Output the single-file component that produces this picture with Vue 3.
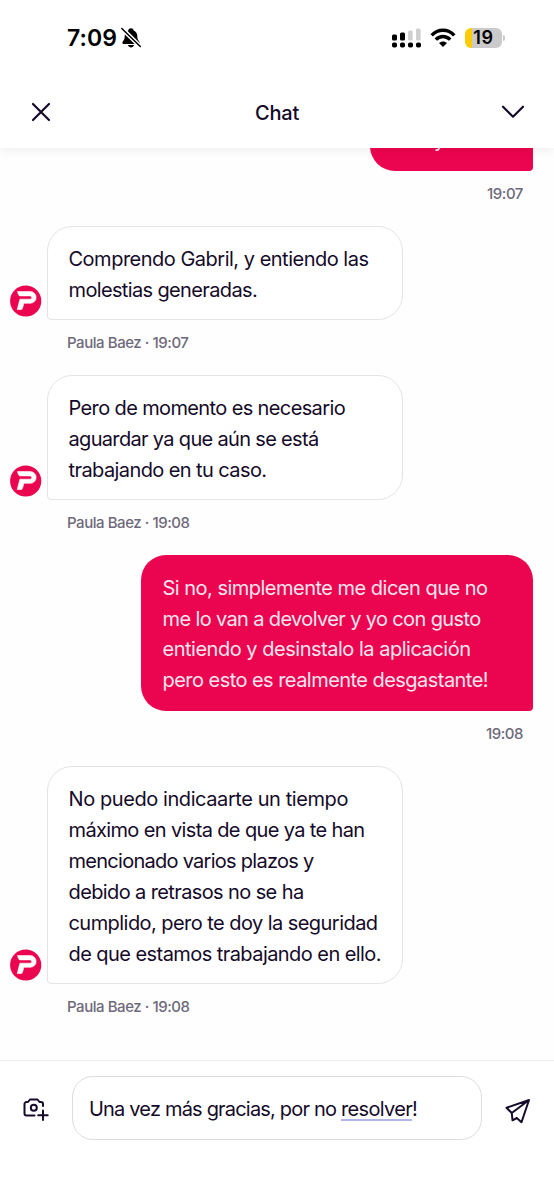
<script setup>
const thread = [
  {
    mine: false,
    lines: [['Comprendo Gabril, y entiendo las', 300], ['molestias generadas.', 188.5]],
    meta: ['Paula Baez · 19:07', 121.5],
  },
  {
    mine: false,
    lines: [['Pero de momento es necesario', 276.5], ['aguardar ya que aún se está', 250], ['trabajando en tu caso.', 198]],
    meta: ['Paula Baez · 19:08', 122.5],
  },
  {
    mine: true,
    lines: [
      ['Si no, simplemente me dicen que no', 325],
      ['me lo van a devolver y yo con gusto', 318],
      ['entiendo y desinstalo la aplicación', 308],
      ['pero esto es realmente desgastante!', 325.5],
    ],
    meta: ['19:08', 37],
  },
  {
    mine: false,
    lines: [
      ['No puedo indicaarte un tiempo', 279.5],
      ['máximo en vista de que ya te han', 296],
      ['mencionado varios plazos y', 245],
      ['debido a retrasos no se ha', 235],
      ['cumplido, pero te doy la seguridad', 309],
      ['de que estamos trabajando en ello.', 312.5],
    ],
    meta: ['Paula Baez · 19:08', 122.5],
  },
]

const vFit = {
  mounted(el, { value }) {
    const natural = el.getBoundingClientRect().width
    el.style.letterSpacing = `${(value - natural) / el.textContent.length}px`
  },
}
</script>

<template>
  <div class="screen">
    <header class="top">
      <div class="status">
        <div class="clock">
          <span v-fit="50">7:09</span>
          <svg class="bell" width="22" height="22" viewBox="0 0 22 22">
            <path d="M11 1.2c1.5 0 2.4.9 2.7 2.2 2.4 1 3.6 3 3.6 5.7 0 3 .8 4.2 2 5.7.8 1 .3 2.2-1 2.2H3.7c-1.3 0-1.8-1.2-1-2.2 1.2-1.5 2-2.7 2-5.7 0-2.700 1.200-4.700 3.600-5.700C8.600 2.100 9.500 1.200 11 1.200zM8 18h6c-.3 1.500-1.500 2.400-3 2.400S8.300 19.500 8 18z" />
            <path d="M1.800 1.500l18.500 18" stroke="#fff" stroke-width="4.500" />
            <path d="M1.800 1.500l18.500 18" stroke="#000" stroke-width="1.500" stroke-linecap="round" />
          </svg>
        </div>
        <div class="indicators">
          <svg width="29" height="20" viewBox="0 0 29 20">
            <rect x="0" y="6.500" width="5" height="6" rx="1.500" />
            <rect x="8" y="4.500" width="5" height="8" rx="1.500" />
            <rect x="16" y="2.500" width="4.600" height="10" rx="1.500" fill="#cfcfcf" />
            <rect x="24" y="0.500" width="4.600" height="12" rx="1.500" fill="#cfcfcf" />
            <rect v-for="x in [0, 8, 16, 24]" :key="x" :x="x" y="14.500" width="5" height="5" rx="1.800" />
          </svg>
          <svg class="wifi" width="26" height="20" viewBox="0 0 26 20">
            <g fill="none" stroke="#000" stroke-width="3.400">
              <path d="M1.700 7.300C8 .6 18 .6 24.300 7.300" />
              <path d="M5.800 11.700c4.100-4.300 10.300-4.300 14.400 0" />
            </g>
            <path d="M13 19l-4-3.900c2.200-2.300 5.800-2.300 8 0z" />
          </svg>
          <div class="battery"><span v-fit="20.5">19</span></div>
        </div>
      </div>
      <div class="bar">
        <svg width="20" height="20" viewBox="0 0 20 20" class="line">
          <path d="M2 2l16 16M18 2L2 18" />
        </svg>
        <h1><span v-fit="44">Chat</span></h1>
        <svg width="24" height="14" viewBox="0 0 24 14" class="line">
          <path d="M2 1.700l10 10 10-10" />
        </svg>
      </div>
    </header>

    <main class="thread">
      <section class="row mine first">
        <div class="bubble cut"><p>y</p></div>
        <div class="meta"><span v-fit="36">19:07</span></div>
      </section>
      <section v-for="(m, i) in thread" :key="i" class="row" :class="{ mine: m.mine }">
        <div class="body">
          <svg v-if="!m.mine" class="avatar" width="32" height="32" viewBox="0 0 32 32">
            <circle cx="15.700" cy="16" r="15.600" fill="#eb044f" />
            <path d="M7.400 6.600H20.300a5.850 5.850 0 0 1 0 11.700H13.900L12.500 23.300Q12.200 24.500 11 24.500H7.200L9.900 14.200H20.100a1.650 1.650 0 0 0 0-3.300H10.300Q9 10.900 8.500 9.700z" fill="#fff" stroke="#fff" stroke-width=".6" stroke-linejoin="round" />
          </svg>
          <div class="bubble">
            <p v-for="line in m.lines" :key="line[0]"><span v-fit="line[1]">{{ line[0] }}</span></p>
          </div>
        </div>
        <div class="meta"><span v-fit="m.meta[1]">{{ m.meta[0] }}</span></div>
      </section>
    </main>

    <footer class="composer">
      <svg class="camera" width="26" height="24" viewBox="0 0 26 24">
        <g fill="none" stroke="#170b2b" stroke-width="2" stroke-linecap="round" stroke-linejoin="round">
          <path d="M11.500 17.500H3.500a2 2 0 0 1-2-2V6a2 2 0 0 1 2-2H5l2-2.500h7.500L16.500 4H18a2 2 0 0 1 2 2v2" />
          <circle cx="10.800" cy="9.800" r="3" />
          <path d="M20 12.500v9.500M15.200 17.300h9.500" />
        </g>
      </svg>
      <div class="field">
        <span v-fit="252">Una vez más gracias, por no&nbsp;</span><span v-fit="71" class="marked">resolver</span><span>!</span>
      </div>
      <svg class="send" width="26" height="26" viewBox="0 0 26 26">
        <path d="M24 2L1.500 9.800l5.300 5.200L24 2l-7.500 22.200-4.700-4.200-4.300 2.300-.7-7.300" fill="none" stroke="#170b2b" stroke-width="2" stroke-linejoin="round" stroke-linecap="round" />
      </svg>
    </footer>
  </div>
</template>

<style>
body {
  background: #fff;
}
</style>

<style scoped>
.screen {
  width: 554px;
  height: 1200px;
  display: flex;
  flex-direction: column;
  overflow: hidden;
  background: #fefefe;
  color: #150a29;
  font-family: Inter, "Liberation Sans", sans-serif;
  font-size: 20px;
}
svg {
  display: block;
  flex: none;
}
span {
  white-space: nowrap;
}
.top {
  flex: none;
  height: 148px;
  background: #fff;
  box-shadow: 0 1px 10px rgba(70, 0, 25, 0.09);
  position: relative;
  z-index: 1;
}
.status {
  height: 76px;
  padding: 0 49px 0 67px;
  display: flex;
  align-items: center;
  justify-content: space-between;
  color: #000;
}
.clock {
  display: flex;
  align-items: center;
  font-size: 23px;
  font-weight: 600;
}
.bell {
  margin-left: 3px;
}
.indicators {
  display: flex;
  align-items: center;
}
.wifi {
  margin: 0 9px 0 9px;
}
.battery {
  width: 37px;
  height: 20px;
  margin-right: 3px;
  border-radius: 6px;
  position: relative;
  background: linear-gradient(90deg, #fccb08 7px, #cacaca 7px);
  text-align: center;
  font-size: 18px;
  line-height: 20px;
  font-weight: 600;
}
.battery::after {
  content: "";
  position: absolute;
  right: -3px;
  top: 7px;
  width: 2px;
  height: 6px;
  border-radius: 0 3px 3px 0;
  background: #cacaca;
}
.bar {
  height: 72px;
  padding: 0 29px 0 31px;
  display: grid;
  grid-template-columns: 20px 1fr 24px;
  align-items: center;
}
.line {
  fill: none;
  stroke: #150a29;
  stroke-width: 2.2;
  stroke-linecap: round;
  stroke-linejoin: round;
}
h1 {
  margin: 2px 0 0 2px;
  text-align: center;
  font-size: 20px;
  line-height: 24px;
  font-weight: 500;
}
.thread {
  flex: 1;
  min-height: 0;
  overflow: hidden;
}
.row {
  display: flex;
  flex-direction: column;
  align-items: flex-start;
  padding: 0 21px 0 10px;
  margin-bottom: 21.7px;
}
.mine {
  align-items: flex-end;
}
.body {
  display: flex;
  align-items: flex-end;
}
.avatar {
  margin: 0 5px 3px 0;
}
.bubble {
  box-sizing: border-box;
  width: 356px;
  padding: 17px 21px 13.600px 20.500px;
  border: 1px solid #e4e3e8;
  border-radius: 25px 25px 25px 4px;
  background: #fff;
}
.mine .bubble {
  width: 392px;
  padding: 18px 21px 15.200px 21.500px;
  border: 0;
  border-radius: 25px 25px 4px 25px;
  background: #eb044f;
  color: #ffe6f0;
}
.mine .cut {
  width: 163px;
  height: 54px;
  margin-top: -31px;
  padding: 8px 0 0 64px;
}
p {
  margin: 0;
  height: 30.900px;
  line-height: 30.900px;
}
.meta {
  height: 20px;
  margin: 13px 10px 0 57px;
  line-height: 20px;
  font-size: 15px;
  font-weight: 500;
  color: #6e697a;
}
.first {
  margin-bottom: 21.700px;
}
.composer {
  flex: none;
  height: 139.500px;
  border-top: 1px solid #ececef;
  display: flex;
  align-items: flex-start;
  background: #fff;
}
.camera {
  margin: 37px 0 0 23px;
}
.field {
  box-sizing: border-box;
  width: 410px;
  height: 64px;
  margin: 15px 23px 0;
  padding: 2px 16px 0;
  border: 1px solid #dddce1;
  border-radius: 21px;
  display: flex;
  align-items: center;
}
.marked {
  position: relative;
}
.marked::after {
  content: "";
  position: absolute;
  left: 0;
  right: 0;
  bottom: 0;
  height: 2px;
  background: #b0b7e8;
}
.send {
  margin-top: 37px;
}
</style>
